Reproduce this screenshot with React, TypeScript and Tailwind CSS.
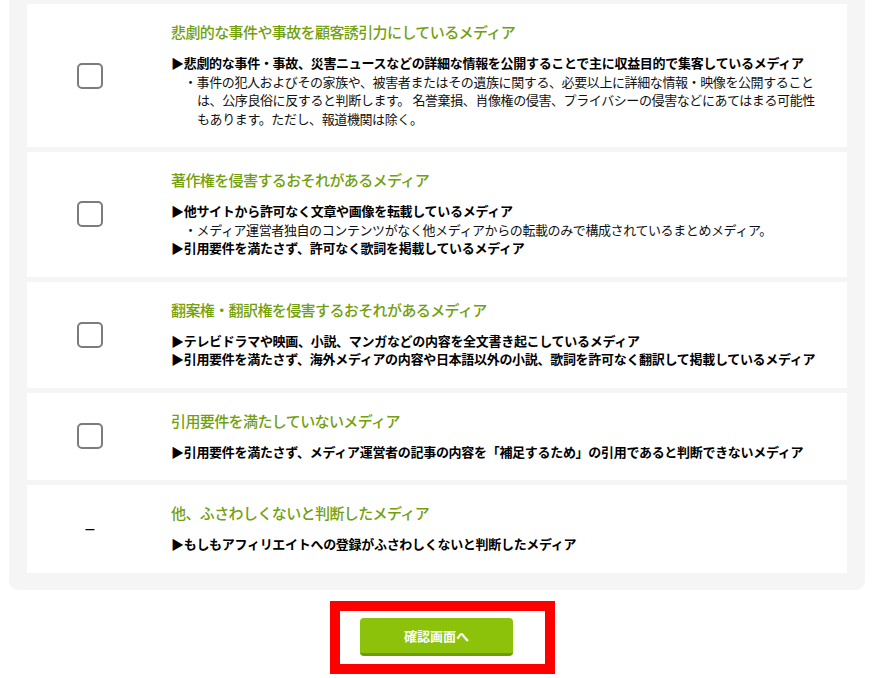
import React from 'react';

type Line = { text: string | React.ReactNode; sub?: boolean };

interface Item {
  title: string;
  lines: Line[];
  noCheck?: boolean;
}

const items: Item[] = [
  {
    title: '悲劇的な事件や事故を顧客誘引力にしているメディア',
    lines: [
      { text: '▶悲劇的な事件・事故、災害ニュースなどの詳細な情報を公開することで主に収益目的で集客しているメディア' },
      {
        sub: true,
        text: (
          <>
            ・事件の犯人およびその家族や、被害者またはその遺族に関する、必要以上に詳細な情報・映像を公開すること
            <br />
            は、公序良俗に反すると判断します。 名誉棄損、肖像権の侵害、プライバシーの侵害などにあてはまる可能性
            <br />
            もあります。ただし、報道機関は除く。
          </>
        ),
      },
    ],
  },
  {
    title: '著作権を侵害するおそれがあるメディア',
    lines: [
      { text: '▶他サイトから許可なく文章や画像を転載しているメディア' },
      { sub: true, text: '・メディア運営者独自のコンテンツがなく他メディアからの転載のみで構成されているまとめメディア。' },
      { text: '▶引用要件を満たさず、許可なく歌詞を掲載しているメディア' },
    ],
  },
  {
    title: '翻案権・翻訳権を侵害するおそれがあるメディア',
    lines: [
      { text: '▶テレビドラマや映画、小説、マンガなどの内容を全文書き起こしているメディア' },
      { text: '▶引用要件を満たさず、海外メディアの内容や日本語以外の小説、歌詞を許可なく翻訳して掲載しているメディア' },
    ],
  },
  {
    title: '引用要件を満たしていないメディア',
    lines: [
      { text: '▶引用要件を満たさず、メディア運営者の記事の内容を「補足するため」の引用であると判断できないメディア' },
    ],
  },
  {
    title: '他、ふさわしくないと判断したメディア',
    lines: [{ text: '▶もしもアフィリエイトへの登録がふさわしくないと判断したメディア' }],
    noCheck: true,
  },
];

function MediaRow({ item }: { item: Item }) {
  return (
    <div className="flex items-center bg-white">
      {/* check column */}
      <div className="w-[126px] shrink-0 flex justify-center">
        {item.noCheck ? (
          <span className="text-[16px] leading-none text-black font-['Liberation_Sans',sans-serif]">–</span>
        ) : (
          <span className="block w-[26px] h-[26px] border-2 border-[#7c7c7c] rounded-[5px] bg-white" />
        )}
      </div>

      {/* text column */}
      <div className="flex-1 pl-[18px] pr-[16px] pt-[18px] pb-[19px]">
        <h3 className="text-[15px] leading-[20px] tracking-[-0.6px] text-[#72a00c] font-medium mb-[12px]">
          {item.title}
        </h3>
        {item.lines.map((line, i) =>
          line.sub ? (
            <p key={i} className="text-[13px] leading-[18.5px] tracking-[-0.4px] text-[#111] pl-[26px] -indent-[13px]">
              {line.text}
            </p>
          ) : (
            <p key={i} className="text-[13px] leading-[18.5px] tracking-[-0.3px] text-black font-bold">
              {line.text}
            </p>
          )
        )}
      </div>
    </div>
  );
}

export default function App() {
  return (
    <div className="min-h-screen bg-white font-['Noto_Sans_CJK_JP','Noto_Sans',sans-serif]">
      <div className="mx-[9px] bg-[#f5f5f5] rounded-b-[9px] px-[18px] pt-[4px] pb-[17px] flex flex-col gap-[5px]">
        {items.map((item) => (
          <MediaRow key={item.title} item={item} />
        ))}
      </div>

      <div className="flex justify-center mt-[11px]">
        <div className="ml-[11px] border-[10px] border-[#ff0000] bg-white pl-[20px] pr-[32px] pt-[7px] pb-[8px]">
          <button
            type="button"
            className="w-[153px] h-[38px] bg-[#8cc20a] rounded-[4px] border-b-[3px] border-[#6f9b08] text-white font-bold text-[13px] leading-none"
          >
            確認画面へ
          </button>
        </div>
      </div>
    </div>
  );
}
